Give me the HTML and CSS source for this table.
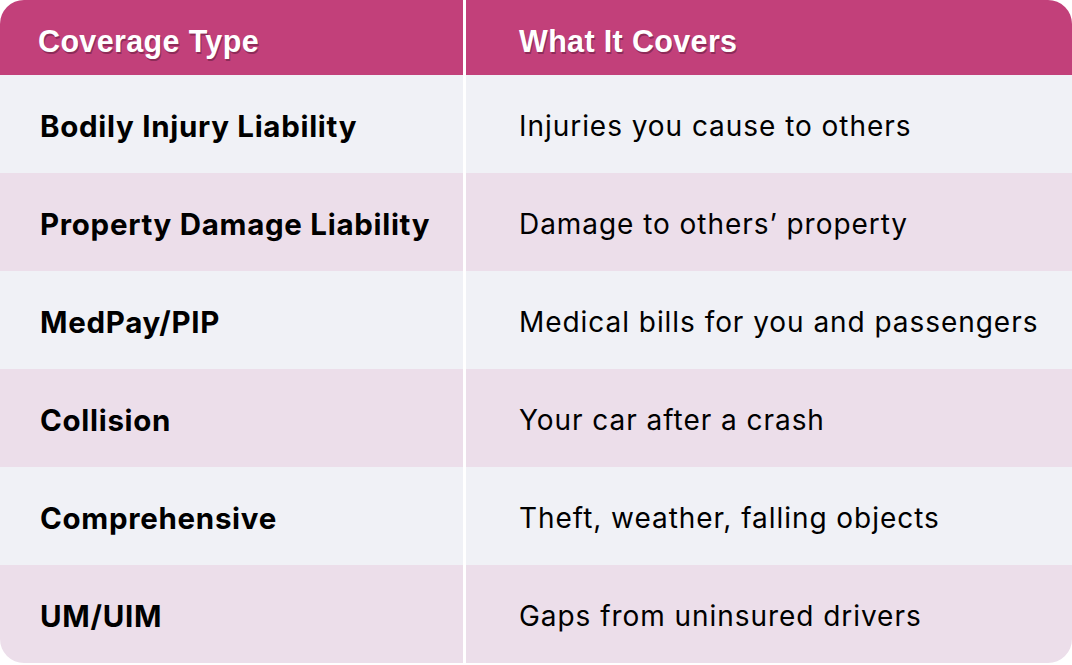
FILE: index.html
```html
<!DOCTYPE html>
<html lang="en">
<head>
<meta charset="utf-8">
<title>Coverage Types</title>
<link rel="stylesheet" href="styles.css">
</head>
<body>
<div class="table">
  <div class="row head">
    <div class="cell c1"><span>Coverage Type</span></div>
    <div class="cell c2"><span>What It Covers</span></div>
  </div>
  <div class="row odd">
    <div class="cell c1">Bodily Injury Liability</div>
    <div class="cell c2">Injuries you cause to others</div>
  </div>
  <div class="row even">
    <div class="cell c1">Property Damage Liability</div>
    <div class="cell c2">Damage to others’ property</div>
  </div>
  <div class="row odd">
    <div class="cell c1">MedPay/PIP</div>
    <div class="cell c2">Medical bills for you and passengers</div>
  </div>
  <div class="row even">
    <div class="cell c1">Collision</div>
    <div class="cell c2">Your car after a crash</div>
  </div>
  <div class="row odd">
    <div class="cell c1">Comprehensive</div>
    <div class="cell c2">Theft, weather, falling objects</div>
  </div>
  <div class="row even">
    <div class="cell c1">UM/UIM</div>
    <div class="cell c2">Gaps from uninsured drivers</div>
  </div>
</div>
</body>
</html>
```

FILE: styles.css
```css
html, body {
  margin: 0;
  padding: 0;
  background: #ffffff;
}

.table {
  width: 1072px;
  height: 663px;
  border-radius: 24px;
  overflow: hidden;
  display: grid;
  grid-template-rows: 75px repeat(6, 98px);
  font-family: Inter, "Liberation Sans", sans-serif;
  color: #000000;
}

.row {
  display: grid;
  grid-template-columns: 463px 1fr;
  column-gap: 3px;
  background: #ffffff;
}

.cell {
  display: flex;
  align-items: center;
  padding-top: 4px;
}

.c1 {
  padding-left: 40px;
  font-weight: 700;
  font-size: 29.5px;
  letter-spacing: 0.7px;
}

.c2 {
  padding-left: 53px;
  font-weight: 400;
  font-size: 28px;
  letter-spacing: 0.95px;
}

.head .cell {
  background: #c2407a;
  color: #ffffff;
  font-family: "Liberation Sans", Arial, sans-serif;
  font-weight: 700;
  font-size: 30.5px;
  letter-spacing: 0.35px;
  text-shadow: 1px 2px 0 #8e2b58;
  padding-top: 8px;
}

.head .c1 {
  padding-left: 38px;
}

.odd .cell {
  background: #f0f1f6;
}

.even .cell {
  background: #ecdeea;
}
```
